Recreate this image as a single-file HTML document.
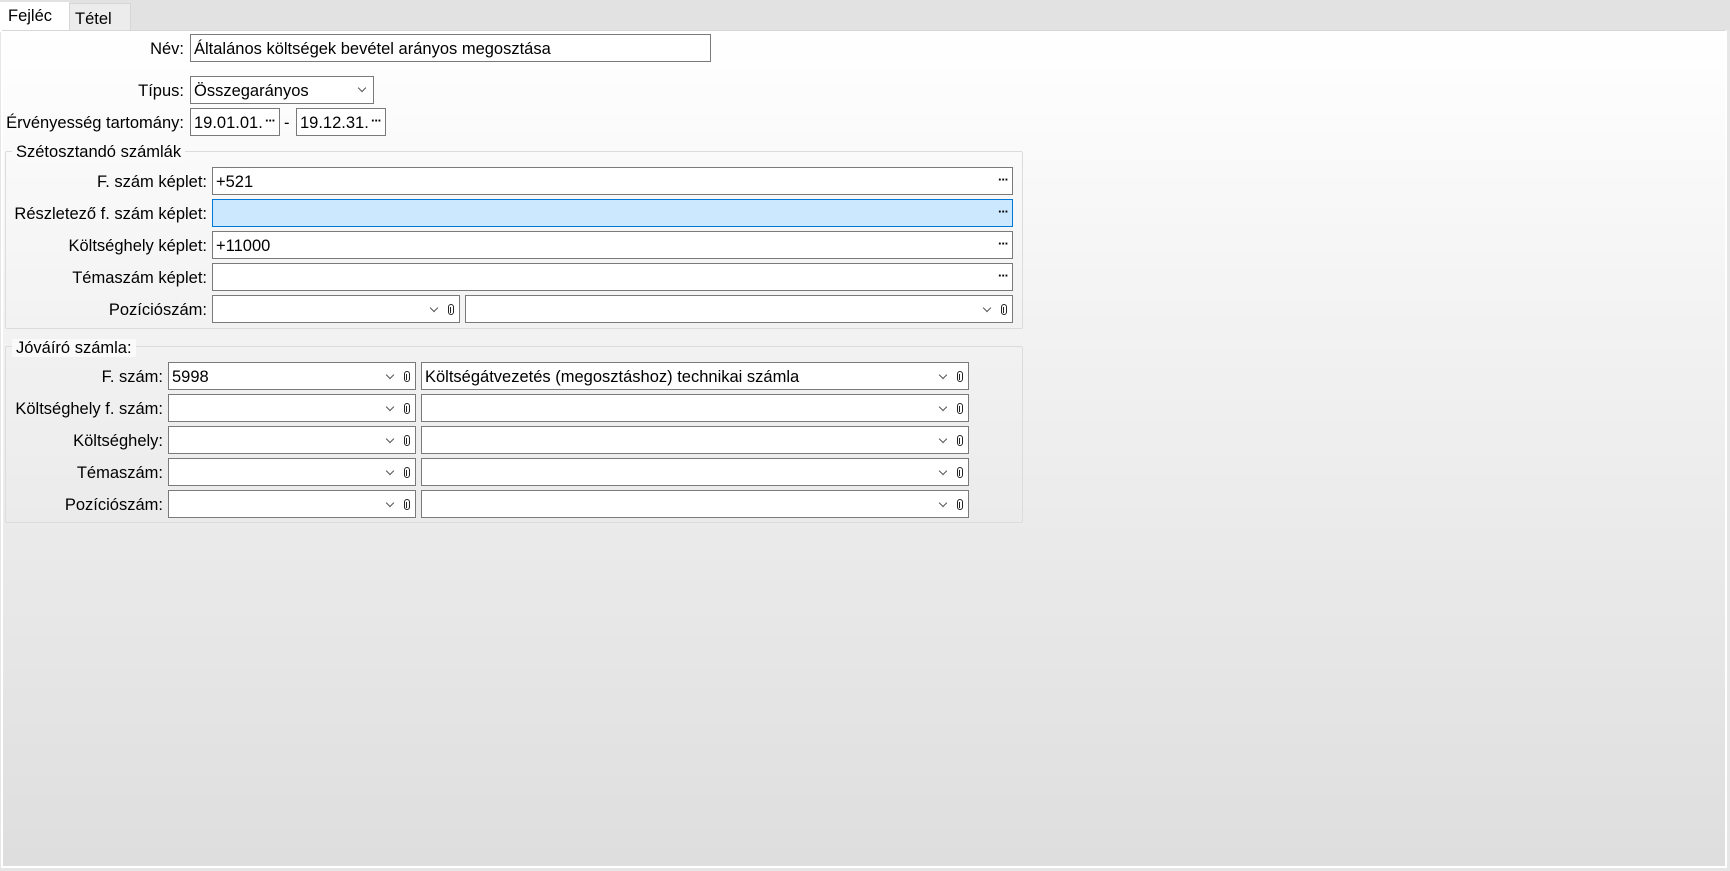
<!DOCTYPE html>
<html><head><meta charset="utf-8"><style>
*{box-sizing:border-box}
body{margin:0;width:1730px;height:871px;background:#e6e6e6;font-family:"Liberation Sans",sans-serif;font-size:16.5px;color:#000;position:relative;overflow:hidden}
.a{position:absolute}
.tabs{left:0;top:0;width:1730px;height:30px;background:#e2e2e2}
.tab{position:absolute;top:2px;height:29px;padding-top:5px}
.panel{left:1px;top:30px;width:1726px;height:838px;border:2px solid #fff;border-top:1px solid #d8d8d8;background:linear-gradient(#ffffff,#f2f2f2 300px,#dedede)}
.lbl{position:absolute;text-align:right;white-space:nowrap;line-height:30px}
.in{position:absolute;height:28px;border:1px solid #7a7a7a;background:#fff;line-height:29px;padding-left:3px;white-space:nowrap}
.dots{position:absolute;right:4px;top:-1px;font-size:13px;font-weight:bold;letter-spacing:-1px;line-height:26px}
.ch{position:absolute;top:9px;width:6px;height:6px;border-right:1px solid #555;border-bottom:1px solid #555;transform:rotate(45deg)}
.clip{position:absolute;top:8px;width:6px;height:11px;border:1.5px solid #222;border-radius:3px}
.clip:after{content:"";position:absolute;left:1px;top:2px;width:1px;height:6px;background:#222}
.grp{position:absolute;border:1px solid #dcdcdc;border-radius:2px}
.leg{position:absolute;background:#fafafa;padding:0 4px;line-height:18px}
</style></head><body>
<div class="a tabs"></div>
<div class="tab" style="left:0;width:69px;background:#fff;height:30px;padding-left:8px">Fejléc</div>
<div class="tab" style="left:69px;width:62px;background:#ececec;border:1px solid #d6d6d6;border-bottom:none;padding-left:5px;top:3px;padding-top:6px">Tétel</div>
<div class="a panel"></div>

<div class="lbl" style="right:1546px;top:34px">Név:</div>
<div class="in" style="left:190px;top:34px;width:521px">Általános költségek bevétel arányos megosztása</div>
<div class="lbl" style="right:1546px;top:76px">Típus:</div>
<div class="in" style="left:190px;top:76px;width:184px">Összegarányos<span class="ch" style="right:8px;top:8px"></span></div>
<div class="lbl" style="right:1546px;top:108px">Érvényesség tartomány:</div>
<div class="in" style="left:190px;top:108px;width:90px">19.01.01.<span class="dots">···</span></div>
<div class="lbl" style="left:284px;top:108px">-</div>
<div class="in" style="left:296px;top:108px;width:90px">19.12.31.<span class="dots">···</span></div>

<div class="grp" style="left:5px;top:151px;width:1018px;height:178px"></div>
<div class="leg" style="left:12px;top:143px">Szétosztandó számlák</div>
<div class="lbl" style="right:1523px;top:167px">F. szám képlet:</div>
<div class="in" style="left:212px;top:167px;width:801px">+521<span class="dots">···</span></div>
<div class="lbl" style="right:1523px;top:199px">Részletező f. szám képlet:</div>
<div class="in" style="left:212px;top:199px;width:801px;background:#cce8ff;border-color:#0078d7">&nbsp;<span class="dots">···</span></div>
<div class="lbl" style="right:1523px;top:231px">Költséghely képlet:</div>
<div class="in" style="left:212px;top:231px;width:801px">+11000<span class="dots">···</span></div>
<div class="lbl" style="right:1523px;top:263px">Témaszám képlet:</div>
<div class="in" style="left:212px;top:263px;width:801px">&nbsp;<span class="dots">···</span></div>
<div class="lbl" style="right:1523px;top:295px">Pozíciószám:</div>
<div class="in" style="left:212px;top:295px;width:248px"><span class="ch" style="right:22px"></span><span class="clip" style="right:5px"></span></div>
<div class="in" style="left:465px;top:295px;width:548px"><span class="ch" style="right:22px"></span><span class="clip" style="right:5px"></span></div>

<div class="grp" style="left:5px;top:346px;width:1018px;height:177px"></div>
<div class="leg" style="left:12px;top:339px">Jóváíró számla:</div>

<div class="lbl" style="right:1567px;top:362px">F. szám:</div>
<div class="in" style="left:168px;top:362px;width:248px">5998<span class="ch" style="right:22px"></span><span class="clip" style="right:5px"></span></div>
<div class="in" style="left:421px;top:362px;width:548px">Költségátvezetés (megosztáshoz) technikai számla<span class="ch" style="right:22px"></span><span class="clip" style="right:5px"></span></div>

<div class="lbl" style="right:1567px;top:394px">Költséghely f. szám:</div>
<div class="in" style="left:168px;top:394px;width:248px"><span class="ch" style="right:22px"></span><span class="clip" style="right:5px"></span></div>
<div class="in" style="left:421px;top:394px;width:548px"><span class="ch" style="right:22px"></span><span class="clip" style="right:5px"></span></div>

<div class="lbl" style="right:1567px;top:426px">Költséghely:</div>
<div class="in" style="left:168px;top:426px;width:248px"><span class="ch" style="right:22px"></span><span class="clip" style="right:5px"></span></div>
<div class="in" style="left:421px;top:426px;width:548px"><span class="ch" style="right:22px"></span><span class="clip" style="right:5px"></span></div>

<div class="lbl" style="right:1567px;top:458px">Témaszám:</div>
<div class="in" style="left:168px;top:458px;width:248px"><span class="ch" style="right:22px"></span><span class="clip" style="right:5px"></span></div>
<div class="in" style="left:421px;top:458px;width:548px"><span class="ch" style="right:22px"></span><span class="clip" style="right:5px"></span></div>

<div class="lbl" style="right:1567px;top:490px">Pozíciószám:</div>
<div class="in" style="left:168px;top:490px;width:248px"><span class="ch" style="right:22px"></span><span class="clip" style="right:5px"></span></div>
<div class="in" style="left:421px;top:490px;width:548px"><span class="ch" style="right:22px"></span><span class="clip" style="right:5px"></span></div>
</body></html>
